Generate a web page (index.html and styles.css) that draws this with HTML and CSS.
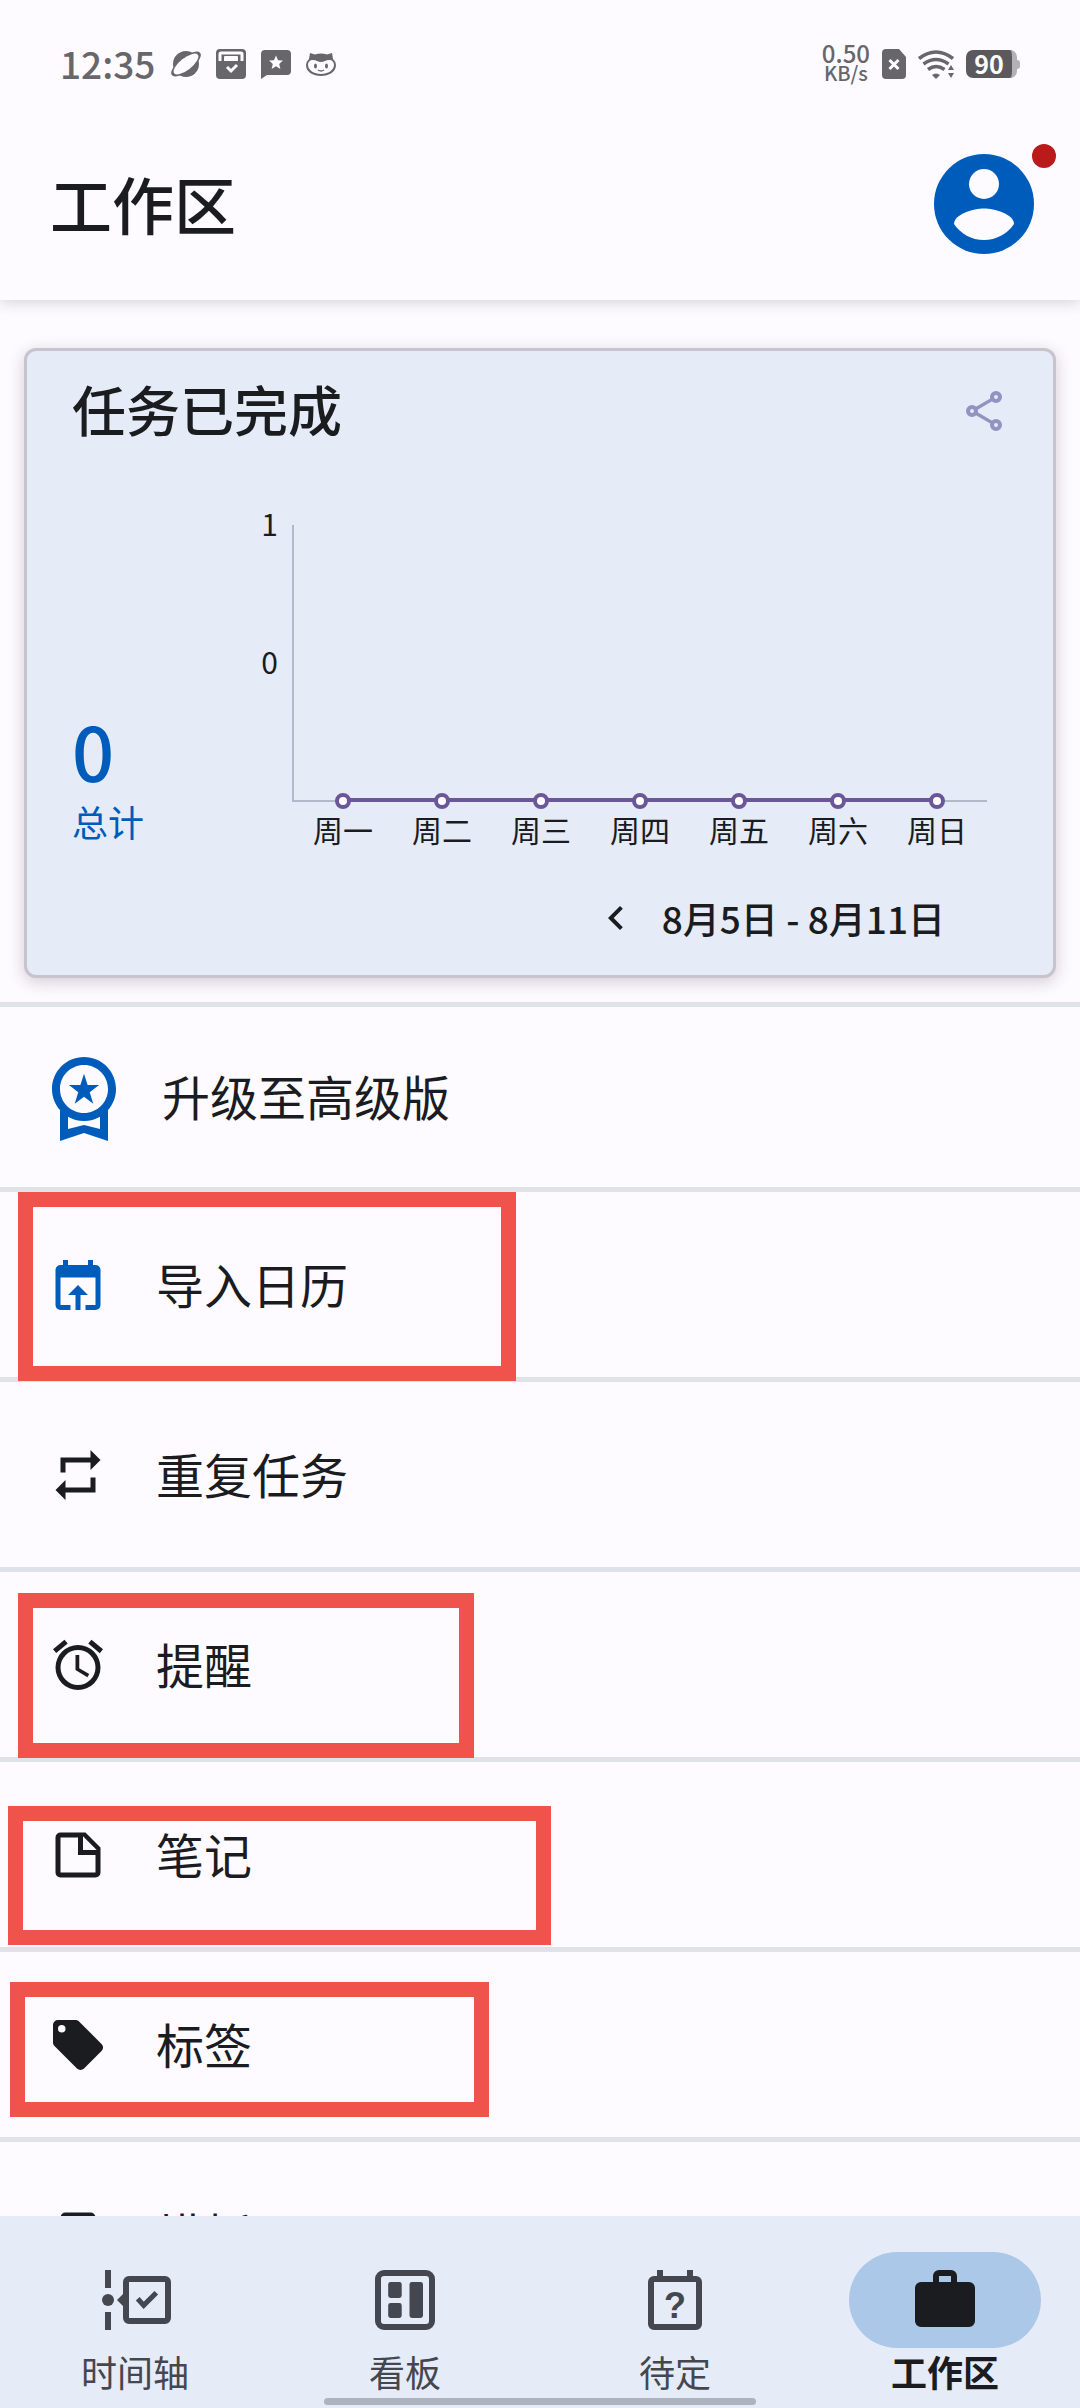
FILE: index.html
```html
<!DOCTYPE html>
<html lang="zh-CN">
<head>
<meta charset="utf-8">
<meta name="viewport" content="width=device-width, initial-scale=1">
<title>工作区</title>
<link rel="stylesheet" href="styles.css">
</head>
<body>
<div class="app">
  <div class="status-bar">
    <span class="clock">12:35</span>
    <div class="status-icons">
      <svg width="30" height="30" viewBox="0 0 30 30" aria-hidden="true">
        <g transform="rotate(-38 15 15)"><ellipse class="ink" cx="15" cy="15" rx="18" ry="7"/></g>
        <circle class="ink" cx="15" cy="15" r="13"/>
        <g transform="rotate(-38 15 15)"><ellipse class="paper" cx="15" cy="15" rx="15" ry="6"/></g>
      </svg>
      <svg width="30" height="30" viewBox="0 0 30 30" aria-hidden="true">
        <rect class="ink" width="30" height="30" rx="4"/>
        <path class="paper-line" d="M4 12V5a1 1 0 0 1 1-1h20a1 1 0 0 1 1 1v7" stroke-width="3"/>
        <path class="paper" d="M8 12V8a1 1 0 0 1 1-1h12a1 1 0 0 1 1 1v4z"/>
        <path class="paper-line" d="M11 18l4 4 6-6" stroke-width="3"/>
      </svg>
      <svg width="30" height="30" viewBox="0 0 30 30" aria-hidden="true">
        <path class="ink" d="M4 1h22a4 4 0 0 1 4 4v17a4 4 0 0 1-4 4H6l-6 4V5a4 4 0 0 1 4-4z"/>
        <path class="paper" d="M15 6.500l2 4.700 5 .4-3.800 3.300 1.200 5L15 17.200l-4.400 2.700 1.200-5L8 11.600l5-.4z"/>
      </svg>
      <svg width="30" height="30" viewBox="0 0 30 30" aria-hidden="true">
        <path class="ink" d="M4 4l5 1.500a20 20 0 0 1 12 0L26 4l1 6a9 9 0 0 1 3 6c0 7-7 11-15 11S0 23 0 16a9 9 0 0 1 3-6z"/>
        <path class="paper" d="M7 11c3 0 5 2 8 2s5-2 8-2c3 0 5 2 5 5 0 5-6 9-13 9S2 21 2 16c0-3 2-5 5-5z"/>
        <ellipse class="ink" cx="9.500" cy="17" rx="1.500" ry="2.500"/><ellipse class="ink" cx="20.500" cy="17" rx="1.500" ry="2.500"/>
        <path class="ink-line" d="M12 21q3 2 6 0" stroke-width="1.500"/>
      </svg>
    </div>
    <div class="status-right">
      <div class="speed"><span class="speed-value">0.50</span><span class="speed-unit">KB/s</span></div>
      <svg width="24" height="30" viewBox="0 0 24 30" aria-hidden="true">
        <path class="ink" d="M4 0h13l7 8v18a4 4 0 0 1-4 4H4a4 4 0 0 1-4-4V4a4 4 0 0 1 4-4z"/>
        <path class="paper-line" d="M7.500 11l9 9m0-9l-9 9" stroke-width="3"/>
      </svg>
      <svg width="36" height="30" viewBox="0 0 36 30" aria-hidden="true">
        <g class="ink-line" stroke-width="3.500">
          <path d="M1 9.500q17-13 34 0"/><path d="M5.500 15q12.500-9 25 0"/><path d="M10 20.500q8-6 16.500 0"/>
        </g>
        <path class="ink" d="M14 26q4-3 8 0l-4 4zM30 21l3-5 3 5zM30 24l3 5 3-5z"/>
      </svg>
      <div class="battery"><span class="battery-level">90</span></div>
    </div>
  </div>

  <header class="top-bar">
    <h1 class="page-title">工作区</h1>
    <button class="avatar" type="button" aria-label="账户">
      <svg width="120" height="120" viewBox="0 0 24 24" aria-hidden="true">
        <circle class="blue-fill" cx="12" cy="12" r="10"/>
        <circle class="paper" cx="12" cy="8" r="3"/>
        <path class="paper" d="M12 19.200c-2.500 0-4.710-1.280-6-3.220.03-1.990 4-3.080 6-3.080s5.970 1.090 6 3.080A7.230 7.230 0 0 1 12 19.200z"/>
      </svg>
      <span class="avatar-dot"></span>
    </button>
  </header>

  <main class="content">
    <section class="card">
      <div class="card-head">
        <h2 class="card-title">任务已完成</h2>
        <button class="icon-button share" type="button" aria-label="分享">
          <svg class="outline" width="48" height="48" viewBox="0 0 24 24" stroke-width="2" aria-hidden="true">
            <circle cx="18" cy="5" r="2"/><circle cx="6" cy="12" r="2"/><circle cx="18" cy="19" r="2"/>
            <path d="M8 10.900l8-4.700M8 13.100l8 4.700" stroke-width="1.700"/>
          </svg>
        </button>
      </div>
      <div class="card-body">
        <div class="total">
          <span class="total-value">0</span>
          <span class="total-label">总计</span>
        </div>
        <svg class="chart" viewBox="0 0 756 350" role="img" aria-label="每日完成的任务">
          <path class="axis" d="M41 24V300H735"/>
          <g class="tick" text-anchor="end"><text x="26" y="35">1</text><text x="26" y="173">0</text></g>
          <path class="series" d="M91 299H685"/>
          <g class="point">
            <circle cx="91" cy="300" r="6"/><circle cx="190" cy="300" r="6"/><circle cx="289" cy="300" r="6"/><circle cx="388" cy="300" r="6"/><circle cx="487" cy="300" r="6"/><circle cx="586" cy="300" r="6"/><circle cx="685" cy="300" r="6"/>
          </g>
          <g class="tick" text-anchor="middle">
            <text x="91" y="341">周一</text><text x="190" y="341">周二</text><text x="289" y="341">周三</text><text x="388" y="341">周四</text><text x="487" y="341">周五</text><text x="586" y="341">周六</text><text x="685" y="341">周日</text>
          </g>
        </svg>
      </div>
      <div class="range">
        <button class="icon-button" type="button" aria-label="上一周">
          <svg width="48" height="48" viewBox="0 0 24 24" aria-hidden="true"><path d="M15.410 7.410L14 6l-6 6 6 6 1.410-1.410L10.830 12z"/></svg>
        </button>
        <span class="range-text">8月5日 - 8月11日</span>
      </div>
    </section>

    <ul class="menu">
      <li class="menu-row menu-row-premium"><a class="menu-link" href="#premium">
        <svg class="blue" width="96" height="96" viewBox="0 0 24 24" aria-hidden="true"><path d="M9.680 13.690L12 11.930l2.310 1.760-.88-2.850L15.750 9h-2.840L12 6.190 11.090 9H8.250l2.310 1.840zM20 10c0-4.420-3.580-8-8-8s-8 3.580-8 8c0 2.030.76 3.870 2 5.280V23l6-2 6 2v-7.720c1.240-1.410 2-3.250 2-5.280zM12 4c3.310 0 6 2.690 6 6s-2.690 6-6 6-6-2.690-6-6 2.690-6 6-6zm0 15l-4 1.020v-3.100c1.180.68 2.540 1.080 4 1.080s2.820-.4 4-1.080v3.100z"/></svg>
        <span class="menu-label">升级至高级版</span></a></li>
      <li class="menu-row"><a class="menu-link" href="#import">
        <svg class="blue" width="60" height="60" viewBox="0 0 24 24" aria-hidden="true"><path d="M6 2h2v2h8V2h2v2h1a2 2 0 0 1 2 2v14a2 2 0 0 1-2 2h-4v-2h4V9H5v11h4v2H5a2 2 0 0 1-2-2V6a2 2 0 0 1 2-2h1zM12 12l4 4h-3v6h-2v-6H8z"/></svg>
        <span class="menu-label">导入日历</span></a><span class="mark mark-import"></span></li>
      <li class="menu-row"><a class="menu-link" href="#repeat">
        <svg width="60" height="60" viewBox="0 0 24 24" aria-hidden="true"><path d="M17 17H7v-3l-4 4 4 4v-3h12v-6h-2zM7 7h10v3l4-4-4-4v3H5v6h2z"/></svg>
        <span class="menu-label">重复任务</span></a></li>
      <li class="menu-row"><a class="menu-link" href="#reminders">
        <svg width="60" height="60" viewBox="0 0 24 24" aria-hidden="true"><path d="M22 5.720l-4.600-3.860-1.290 1.530 4.600 3.860zM7.880 3.390L6.600 1.860 2 5.710l1.290 1.530zM12.500 8H11v6l4.750 2.850.75-1.230-4-2.370zM12 4a9 9 0 1 0 0 18 9 9 0 0 0 0-18zm0 16a7 7 0 1 1 0-14 7 7 0 0 1 0 14z"/></svg>
        <span class="menu-label">提醒</span></a><span class="mark mark-reminders"></span></li>
      <li class="menu-row"><a class="menu-link" href="#notes">
        <svg width="60" height="60" viewBox="0 0 24 24" aria-hidden="true"><path d="M14 10h5.500L14 4.500zM5 3h10l6 6v10a2 2 0 0 1-2 2H5a2 2 0 0 1-2-2V5a2 2 0 0 1 2-2m0 2v14h14v-7h-7V5z"/></svg>
        <span class="menu-label">笔记</span></a><span class="mark mark-notes"></span></li>
      <li class="menu-row"><a class="menu-link" href="#tags">
        <svg width="60" height="60" viewBox="0 0 24 24" aria-hidden="true"><path fill-rule="evenodd" d="M5.500 7a1.500 1.500 0 1 1 0-3 1.500 1.500 0 0 1 0 3M21.410 11.580l-9-9C12.050 2.220 11.550 2 11 2H4a2 2 0 0 0-2 2v7c0 .55.22 1.050.59 1.410l8.990 9c.37.36.87.59 1.420.59s1.050-.23 1.410-.59l7-7c.37-.36.59-.86.59-1.410 0-.56-.23-1.060-.59-1.420z"/></svg>
        <span class="menu-label">标签</span></a><span class="mark mark-tags"></span></li>
      <li class="menu-row"><a class="menu-link" href="#templates">
        <svg width="60" height="60" viewBox="0 0 24 24" aria-hidden="true"><path d="M17 3H7a2 2 0 0 0-2 2v16l7-3 7 3V5a2 2 0 0 0-2-2z"/></svg>
        <span class="menu-label">模板</span></a></li>
    </ul>
  </main>

  <nav class="tabs">
    <a class="tab" href="#timeline"><span class="pill">
      <svg width="72" height="72" viewBox="0 0 24 24" aria-hidden="true"><path d="M2 2h2v6H2zM2 16h2v6H2zM8 10l-2 2 2 2z"/><circle cx="3" cy="12" r="2"/><g class="outline"><rect x="9" y="5" width="14" height="14" rx="1" stroke-width="2"/><path d="M12.900 11.600l2 2.200 4.200-4.200" stroke-width="1.700"/></g></svg>
    </span><span class="tab-label">时间轴</span></a>
    <a class="tab" href="#board"><span class="pill">
      <svg width="72" height="72" viewBox="0 0 24 24" aria-hidden="true"><rect class="outline" x="3" y="3" width="18" height="18" rx="2" stroke-width="2"/><rect x="6.400" y="6" width="4.500" height="5.300" rx=".8"/><rect x="6.400" y="13" width="4.500" height="5" rx=".8"/><rect x="13.500" y="6" width="4.500" height="12" rx=".8"/></svg>
    </span><span class="tab-label">看板</span></a>
    <a class="tab" href="#pending"><span class="pill">
      <svg width="72" height="72" viewBox="0 0 24 24" aria-hidden="true"><path d="M6 2h2v3H6zM16 2h2v3h-2z"/><rect class="outline" x="4" y="5" width="16" height="16" rx="1" stroke-width="2"/><text class="question" x="12" y="18" text-anchor="middle">?</text></svg>
    </span><span class="tab-label">待定</span></a>
    <a class="tab tab-active" href="#workspace" aria-current="page"><span class="pill">
      <svg width="72" height="72" viewBox="0 0 24 24" aria-hidden="true"><path d="M10 2h4a2 2 0 0 1 2 2v2h4a2 2 0 0 1 2 2v11a2 2 0 0 1-2 2H4a2 2 0 0 1-2-2V8a2 2 0 0 1 2-2h4V4a2 2 0 0 1 2-2zm0 4h4V4h-4z" fill-rule="evenodd"/></svg>
    </span><span class="tab-label">工作区</span></a>
    <span class="home-indicator"></span>
  </nav>
</div>
</body>
</html>
```

FILE: styles.css
```css
:root {
  --bg: #fdfbff;
  --surface: #e5ebf7;
  --text: #1a1c1f;
  --muted: #44474f;
  --blue: #005cbb;
  --status: #67666a;
  --divider: #dfe2e9;
}

* { box-sizing: border-box; }

body {
  margin: 0;
  background: var(--bg);
  color: var(--text);
  font-family: "Noto Sans CJK SC", "Noto Sans", sans-serif;
}

h1, h2, ul { margin: 0; padding: 0; }
h1, h2 { font-weight: 500; }
svg { display: block; flex: none; fill: currentColor; }
a { color: inherit; text-decoration: none; }

button {
  padding: 0;
  border: 0;
  background: none;
  color: inherit;
  font: inherit;
}

.ink { fill: var(--status); }
.paper { fill: var(--bg); }
.ink-line { fill: none; stroke: var(--status); }
.paper-line { fill: none; stroke: var(--bg); }
.outline { fill: none; stroke: currentColor; }
.blue { color: var(--blue); }
.blue-fill { fill: var(--blue); }

.app {
  display: flex;
  flex-direction: column;
  height: 100vh;
  overflow: hidden;
}

/* Status bar */
.status-bar {
  display: flex;
  align-items: center;
  flex: none;
  position: relative;
  z-index: 2;
  height: 108px;
  padding: 20px 60px 0;
  background: var(--bg);
  color: var(--status);
}

.clock {
  padding-bottom: 3px;
  font-size: 37px;
  line-height: 40px;
  font-weight: 500;
}

.status-icons { display: flex; gap: 15px; margin-left: 16px; }

.status-right {
  display: flex;
  align-items: center;
  gap: 12px;
  margin-left: auto;
}

.speed {
  display: flex;
  flex-direction: column;
  align-items: center;
  padding-bottom: 2px;
  font-weight: 500;
}

.speed-value { font-size: 24px; line-height: 20px; }
.speed-unit { font-size: 20px; line-height: 20px; }

.battery {
  display: flex;
  align-items: center;
  width: 54px;
}

.battery-level {
  flex: 1;
  height: 28px;
  border-right: 5px solid #b3b1b5;
  border-radius: 7px;
  background: #5b595c;
  color: #ffffff;
  font-size: 25px;
  line-height: 26px;
  font-weight: 700;
  text-align: center;
}

.battery::after {
  content: "";
  width: 3px;
  height: 9px;
  border-radius: 0 3px 3px 0;
  background: #b3b1b5;
}

/* Title bar */
.top-bar {
  display: flex;
  align-items: center;
  justify-content: space-between;
  flex: none;
  position: relative;
  height: 192px;
  padding: 0 36px 0 50px;
  background: var(--bg);
  box-shadow: 0 2px 14px rgba(40, 36, 50, 0.2);
}

.avatar { position: relative; }

.page-title {
  padding-bottom: 3px;
  font-size: 62px;
  line-height: 80px;
}

.avatar-dot {
  position: absolute;
  top: 0;
  right: -12px;
  width: 24px;
  height: 24px;
  border-radius: 50%;
  background: #ba1a1a;
}

.content {
  flex: 1;
  min-height: 0;
  padding-top: 48px;
  overflow: hidden;
}

/* Completed tasks card */
.card {
  margin: 0 24px 24px;
  padding: 30px 45px 29px;
  border: 3px solid #c8c4ce;
  border-radius: 12px;
  background: var(--surface);
  box-shadow: 0 4px 16px rgba(60, 40, 60, 0.22);
}

.card-head {
  display: flex;
  align-items: center;
  justify-content: space-between;
  height: 60px;
}

.card-title {
  padding-bottom: 4px;
  font-size: 54px;
  line-height: 60px;
}

.icon-button { display: block; }
.share { color: #9492c0; }

.card-body {
  display: flex;
  align-items: flex-end;
  margin-top: 60px;
}

.total {
  display: flex;
  flex-direction: column;
  flex: none;
  width: 180px;
  padding-bottom: 6px;
  color: var(--blue);
}

.total-value { font-size: 74px; line-height: 94px; font-weight: 500; }
.total-label { font-size: 36px; line-height: 48px; }

.chart { flex: 1; min-width: 0; }
.axis { fill: none; stroke: #b3b9c6; stroke-width: 2; }
.series { fill: none; stroke: #6b5698; stroke-width: 4; }
.point { fill: #ffffff; stroke: #6b5698; stroke-width: 4; }
.tick { font-size: 30px; }

.range {
  display: flex;
  align-items: center;
  justify-content: flex-end;
  gap: 22px;
  margin-top: 39px;
  padding-right: 63px;
}

.range-text { font-size: 37px; line-height: 56px; font-weight: 500; }

/* Menu */
.menu { list-style: none; }

.menu-row {
  position: relative;
  border-top: 5px solid var(--divider);
}

.menu-link {
  display: flex;
  align-items: center;
  gap: 48px;
  height: 185px;
  padding: 0 48px;
}

.menu-row-premium .menu-link {
  gap: 30px;
  height: 180px;
  padding: 0 36px;
}

.menu-label {
  padding-bottom: 4px;
  font-size: 48px;
  line-height: 64px;
}

/* Highlight frames laid over the menu */
.mark {
  position: absolute;
  z-index: 1;
  border: 15px solid #f0534b;
  pointer-events: none;
}

.mark-import { top: 0; left: 18px; width: 498px; height: 189px; }
.mark-reminders { top: 21px; left: 18px; width: 456px; height: 165px; }
.mark-notes { top: 44px; left: 8px; width: 543px; height: 139px; }
.mark-tags { top: 30px; left: 10px; width: 479px; height: 135px; }

/* Bottom tabs */
.tabs {
  display: grid;
  grid-template-columns: repeat(4, 1fr);
  flex: none;
  position: relative;
  z-index: 2;
  padding: 36px 0 14px;
  background: var(--surface);
  color: var(--muted);
}

.tab {
  display: flex;
  flex-direction: column;
  align-items: center;
}

.pill {
  display: flex;
  align-items: center;
  justify-content: center;
  width: 192px;
  height: 96px;
  border-radius: 48px;
}

.tab-label { font-size: 36px; line-height: 46px; }
.tab-active { color: var(--text); font-weight: 700; }
.tab-active .pill { background: #abc8e8; }

.question {
  font: 700 12px "Liberation Sans", sans-serif;
}

.home-indicator {
  position: absolute;
  bottom: 3px;
  left: 30%;
  width: 40%;
  height: 7px;
  border-radius: 4px;
  background: #aeb3bf;
}
```
